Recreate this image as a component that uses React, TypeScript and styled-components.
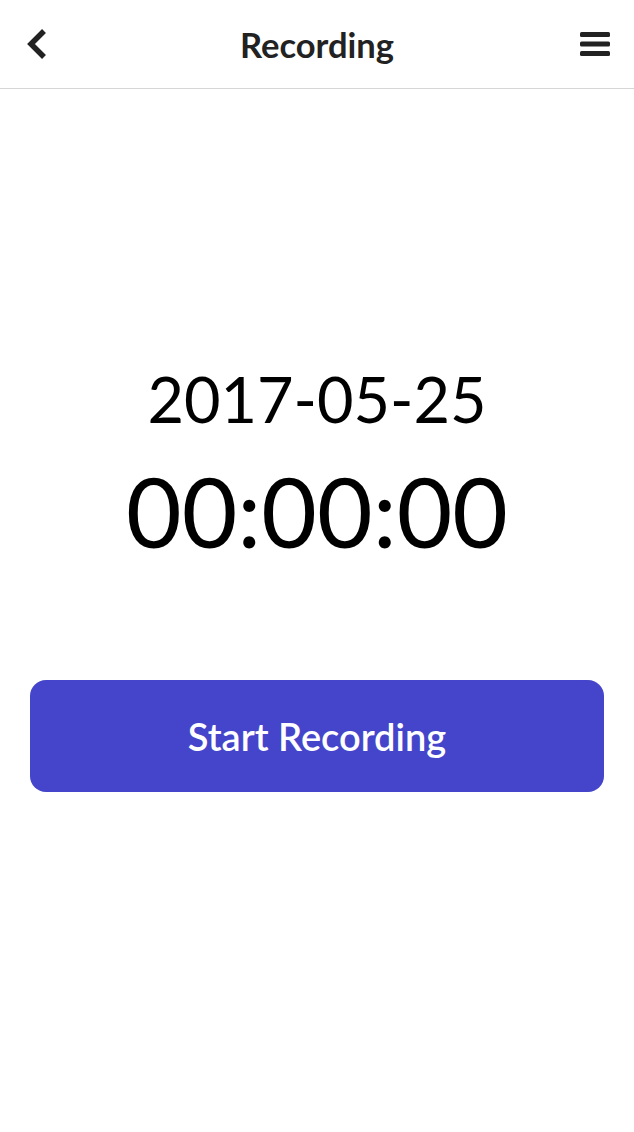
import React from "react";
import styled, { createGlobalStyle } from "styled-components";

const Global = createGlobalStyle`
  html, body { margin: 0; padding: 0; background: #fff; }
  body { font-family: Lato, "Open Sans", sans-serif; -webkit-font-smoothing: antialiased; }
`;

const Page = styled.div`
  width: 634px;
  min-height: 1132px;
  display: flex;
  flex-direction: column;
  background: #fff;
`;

const Header = styled.header`
  height: 88px;
  display: grid;
  grid-template-columns: 1fr auto 1fr;
  align-items: center;
  padding: 0 24px 0 26px;
  border-bottom: 1px solid #d6d6d6;
  box-sizing: content-box;
`;

const IconButton = styled.button<{ $align: "start" | "end" }>`
  height: 34px;
  border: 0;
  background: none;
  padding: 0;
  display: flex;
  align-items: center;
  justify-self: ${(p) => p.$align};
  color: #222;
  cursor: pointer;
`;

const Title = styled.h1`
  margin: 0;
  font-family: Lato, sans-serif;
  font-weight: 700;
  font-size: 34.5px;
  color: #222;
  text-align: center;
  transform: translateX(-1px);
`;

const Main = styled.main`
  display: flex;
  flex-direction: column;
  align-items: center;
  padding: 272px 30px 0;
`;

const DateText = styled.div`
  font-size: 63px;
  line-height: 1.2;
  color: #000;
`;

const Timer = styled.div`
  font-size: 96px;
  line-height: 1.2;
  color: #000;
  margin-top: 16px;
`;

const StartButton = styled.button`
  margin-top: 112px;
  width: 100%;
  height: 112px;
  border: 0;
  border-radius: 16px;
  background: #4545cc;
  color: #fff;
  font-family: Lato, sans-serif;
  font-weight: 600;
  font-size: 38px;
  cursor: pointer;
`;

export default function App() {
  return (
    <Page>
      <Global />
      <Header>
        <IconButton $align="start" aria-label="Back">
          <svg width="22" height="30" viewBox="0 0 22 30">
            <polyline points="18,2 5,15 18,28" fill="none" stroke="#222" strokeWidth="5.5" strokeLinecap="butt" strokeLinejoin="miter" />
          </svg>
        </IconButton>
        <Title>Recording</Title>
        <IconButton $align="end" aria-label="Menu">
          <svg width="30" height="26" viewBox="0 0 30 26">
            <rect x="0" y="1" width="30" height="5" rx="1.5" fill="#222" />
            <rect x="0" y="10.5" width="30" height="5" rx="1.5" fill="#222" />
            <rect x="0" y="20" width="30" height="5" rx="1.5" fill="#222" />
          </svg>
        </IconButton>
      </Header>
      <Main>
        <DateText>2017-05-25</DateText>
        <Timer>00:00:00</Timer>
        <StartButton>Start Recording</StartButton>
      </Main>
    </Page>
  );
}
